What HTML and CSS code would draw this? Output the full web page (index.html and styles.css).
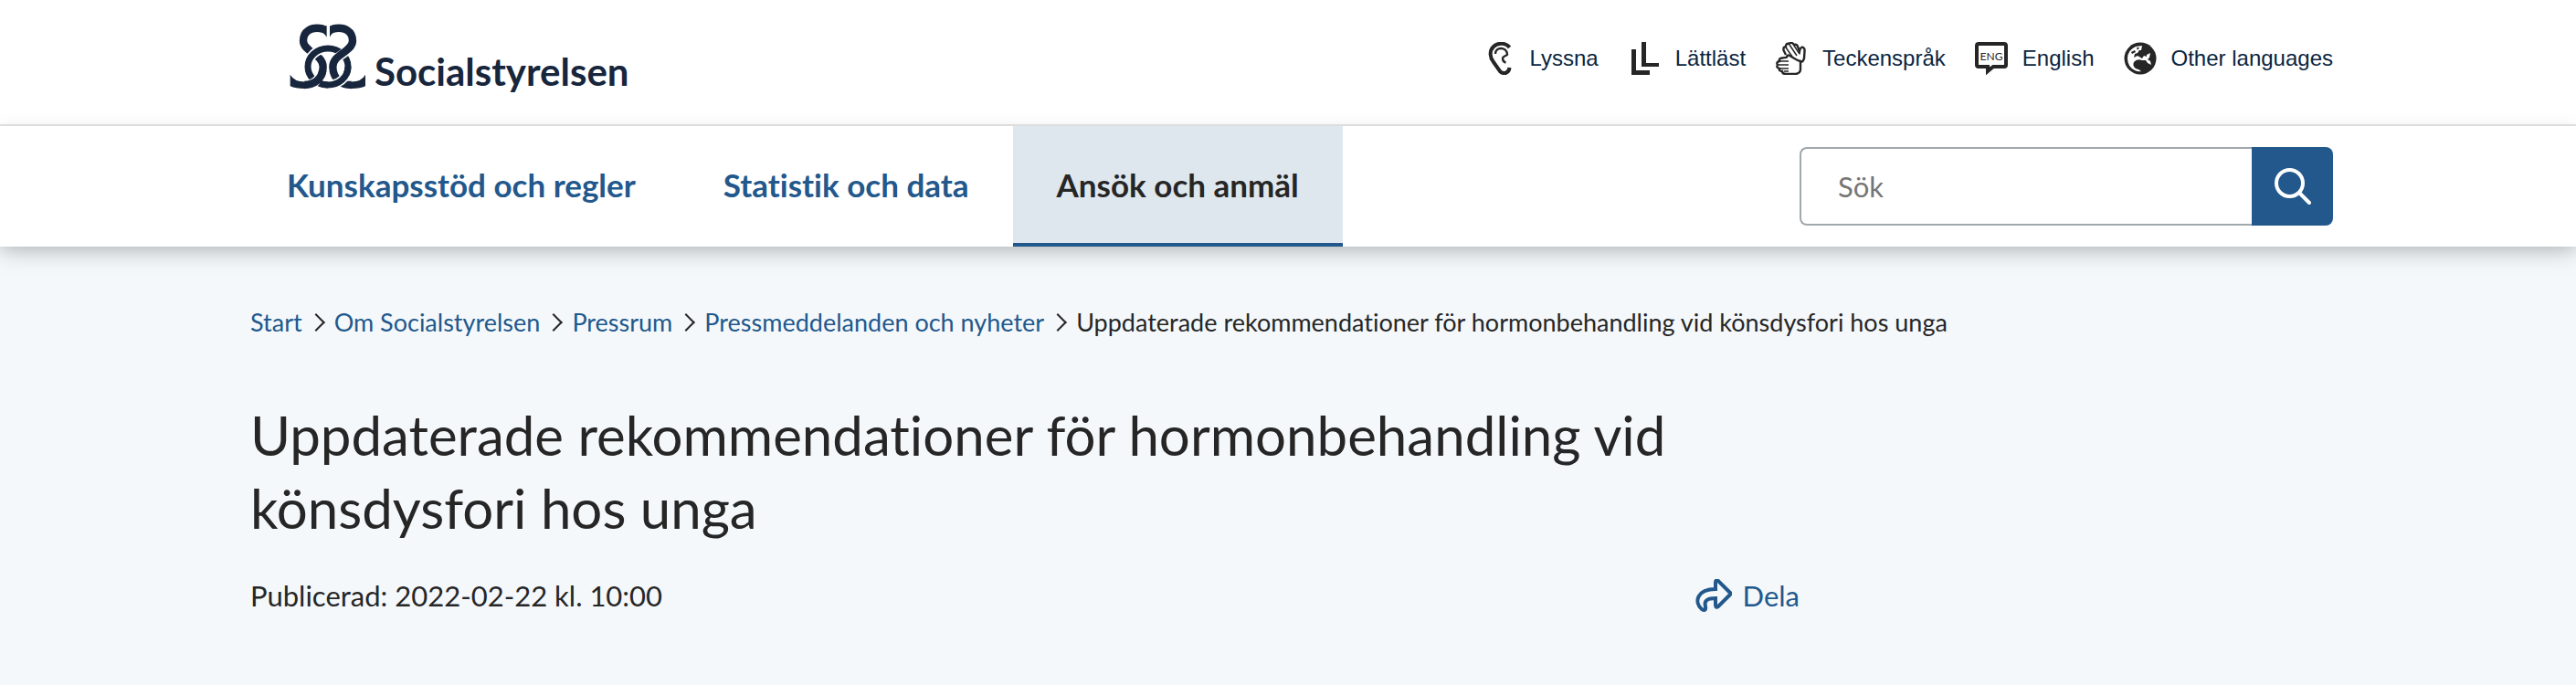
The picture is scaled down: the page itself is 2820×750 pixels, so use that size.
FILE: index.html
```html
<!DOCTYPE html>
<html lang="sv">
<head>
  <meta charset="UTF-8">
  <meta name="viewport" content="width=device-width, initial-scale=1.0">
  <title>Uppdaterade rekommendationer för hormonbehandling vid könsdysfori hos unga - Socialstyrelsen</title>
  <link rel="stylesheet" href="styles.css">
</head>
<body>
  <header>
    <div class="top">
      <div class="container top-row">
        <a class="logo" href="#">
          <svg class="logo-mark" viewBox="72 66 264 228" aria-hidden="true">
            <!-- left S -->
            <path class="band" d="M192 89C150 79 126 98 126 128C127 166 192 172 191 214C190 250 166 273 130 273"/>
            <!-- ring -->
            <ellipse class="halo" cx="207" cy="213" rx="66" ry="60"/>
            <ellipse class="ring" cx="207" cy="213" rx="66" ry="60"/>
            <!-- right S -->
            <path class="halo" d="M288 140C280 168 223 176 223 214C224 240 234 256 250 264"/>
            <path class="band" d="M222 89C264 79 288 98 288 128C287 166 222 172 223 214C224 250 248 273 284 273"/>
            <!-- crossings at the bottom -->
            <path class="halo" d="M184 241C173 262 152 273 130 273"/>
            <path class="band" d="M190 224C186 254 162 273 130 273"/>
            <path class="halo" d="M268 236C257 259 234 273 207 273"/>
            <path class="ring" d="M273 213C273 248 243 273 207 273C196 273 188 271 180 268"/>
            <path class="shape" d="M203 79V116C192 98 178 97 165 97V78Q185 76 203 79zM213 79V116C222 98 236 97 249 97V78Q231 76 213 79z"/>
            <path class="shape" d="M83 239Q98 265 138 262V285Q105 287 83 277zM330 239Q316 265 276 262V285Q309 287 330 277z"/>
          </svg>
          <span>Socialstyrelsen</span>
        </a>
        <ul class="tools">
          <li><a href="#">
            <svg class="icon" viewBox="0 0 36 36" aria-hidden="true">
              <path class="line thick" d="M29.500 6C26 1 17 0 12 5C7 10 8 17 12 22L19 32C23 36 29 34 29.500 28"/>
              <path class="line" d="M14 13C14 5 26 5 27 13C28 15 22 15 22 18C22 21 23 22 25.500 22.500"/>
            </svg>Lyssna</a></li>
          <li><a href="#">
            <svg class="icon" viewBox="0 0 36 36" aria-hidden="true">
              <path d="M15 0h5v23h14v4H15zM4 8h5v23h15v5H4z"/>
            </svg>Lättläst</a></li>
          <li><a href="#">
            <svg class="icon" viewBox="0 0 36 36" aria-hidden="true">
              <path class="line" d="M12 14L9.500 9Q9 5 12 5Q12 1 15.500 2Q18-1 21 3Q24 2 25 5L27 10Q28 5 31 6Q33 7 32.500 10L32 18Q31 22 28 22"/>
              <path class="line thin" d="M12 6l7 10M16 3l8 12M21 4l6 9"/>
              <path class="line" d="M28 21Q24 20 18 16Q14 13 13 16Q14 17 8 17.500Q4 18 5 21Q1 22 3 25Q1 28 5 29Q4 32 8 32Q8 35 12 35H23Q28 34 28 30z"/>
              <path class="line thin" d="M5 21h10M4 25h11M6 29h9M10 32h5"/>
            </svg>Teckenspråk</a></li>
          <li><a href="#">
            <svg class="icon" viewBox="0 0 36 36" aria-hidden="true">
              <path class="line thick" d="M4 2H32Q34 2 34 4V25Q34 27 32 27H20L14 32V27H4Q2 27 2 25V4Q2 2 4 2z"/>
              <path d="M12 27v9l9-9z"/>
              <text class="icon-text" x="18" y="20">ENG</text>
            </svg>English</a></li>
          <li><a href="#">
            <svg class="icon" viewBox="0 0 36 36" aria-hidden="true">
              <circle cx="18" cy="18" r="17.500"/>
              <path class="land" d="M20 4L13 5Q4 9 4 18Q4 27 12 31Q16 33 19 32Q17 30 13 29Q9 26 11 22Q14 18 20 20L24 20L26 23L30 25L29 21L26 19L28 17L29 12L25 14L25 16L22 15L20 18L15 15L11 17L12 13L15 12L17 9L19 9z"/>
              <path d="M8 11l4-2 1 2-4 2zM14 6l3 0-2 3z"/>
            </svg>Other languages</a></li>
        </ul>
      </div>
    </div>
    <div class="menu">
      <div class="container menu-row">
        <nav>
          <a href="#">Kunskapsstöd och regler</a>
          <a href="#">Statistik och data</a>
          <a class="active" href="#">Ansök och anmäl</a>
        </nav>
        <form class="search">
          <input type="text" aria-label="Sök" placeholder="Sök">
          <button type="submit" aria-label="Sök">
            <svg viewBox="0 0 40 40" aria-hidden="true">
              <circle cx="16.500" cy="16.500" r="14.500"/>
              <path d="M27 27l11 11"/>
            </svg>
          </button>
        </form>
      </div>
    </div>
  </header>

  <main class="container">
    <ol class="breadcrumb">
      <li><a href="#">Start</a></li>
      <li><a href="#">Om Socialstyrelsen</a></li>
      <li><a href="#">Pressrum</a></li>
      <li><a href="#">Pressmeddelanden och nyheter</a></li>
      <li>Uppdaterade rekommendationer för hormonbehandling vid könsdysfori hos unga</li>
    </ol>
    <article>
      <h1>Uppdaterade rekommendationer för hormonbehandling vid könsdysfori hos unga</h1>
      <div class="meta">
        <span>Publicerad: 2022-02-22 kl. 10:00</span>
        <button class="share" type="button">
          <svg viewBox="0 0 40 36" aria-hidden="true">
            <path d="M22 11V4q0-4 3-2L38 15q1 1 0 2L25 30q-3 2-3-2V21C14 21 9 23 11 30q1 6-4 3C-2 25 2 11 22 11z"/>
          </svg>
          Dela
        </button>
      </div>
    </article>
  </main>
</body>
</html>
```
FILE: styles.css
```css
* {
  box-sizing: border-box;
}
body {
  margin: 0;
  background-color: #f4f8fb;
  color: #262626;
  font-family: Lato, sans-serif;
  font-size: 31px;
  font-variant-ligatures: none;
}
a {
  color: #22588c;
  text-decoration: none;
}
ul, ol {
  list-style: none;
  margin: 0;
  padding: 0;
}
.container {
  max-width: 2288px;
  margin: 0 auto;
}

/* Header */
header {
  background-color: #fff;
  box-shadow: 0 4px 24px rgba(0, 0, 0, 0.25);
}
.top-row {
  display: flex;
  align-items: flex-start;
  justify-content: space-between;
  height: 136px;
  padding: 22px 0 0 48px;
}
.logo {
  display: flex;
  gap: 8px;
  color: #17263c;
  font-size: 42px;
  font-weight: 700;
  line-height: 112px;
}
.logo-mark {
  width: 88px;
  height: 80px;
  fill: none;
}
.logo-mark .band {
  stroke: #17263c;
  stroke-width: 25;
}
.logo-mark .ring {
  stroke: #17263c;
  stroke-width: 21;
}
.logo-mark .halo {
  stroke: #fff;
  stroke-width: 31;
}
.logo-mark .shape {
  fill: #17263c;
}
.tools {
  display: flex;
  gap: 32px;
  padding-top: 24px;
}
.tools a {
  display: flex;
  align-items: center;
  gap: 16px;
  color: #0b2540;
  font-family: "Liberation Sans", Arial, sans-serif;
  font-size: 24px;
  line-height: 36px;
}
.icon {
  width: 36px;
  height: 36px;
  fill: #262626;
}
.icon .line {
  fill: none;
  stroke: #262626;
  stroke-width: 2.4;
}
.icon .thick {
  stroke-width: 4;
}
.icon .thin {
  stroke-width: 1.5;
}
.icon .land {
  fill: #fff;
}
.icon-text {
  font-family: Lato, sans-serif;
  font-size: 12px;
  text-anchor: middle;
}

/* Menu */
.menu {
  border-top: 2px solid #ddd;
  background-color: #fff;
  box-shadow: 0 0 16px rgba(0, 0, 0, 0.06);
}
.menu-row {
  display: flex;
  align-items: center;
  justify-content: space-between;
}
nav {
  display: flex;
}
nav a {
  padding: 0 48px;
  border-bottom: 4px solid transparent;
  font-size: 35px;
  font-weight: 700;
  line-height: 128px;
}
nav .active {
  border-color: #22588c;
  background-color: #dfe7ee;
  color: #262626;
}
.search {
  display: flex;
  width: 584px;
  height: 86px;
}
.search input {
  flex: 1;
  min-width: 0;
  padding: 0 40px;
  border: 2px solid #a0a8ac;
  border-right: none;
  border-radius: 8px 0 0 8px;
  background-color: #fff;
  font-family: inherit;
  font-size: 31px;
}
.search input::placeholder {
  color: #757575;
}
.search button {
  display: flex;
  align-items: center;
  justify-content: center;
  width: 89px;
  padding: 0;
  border: none;
  border-radius: 0 8px 8px 0;
  background-color: #22588c;
  cursor: pointer;
}
.search svg {
  width: 40px;
  height: 40px;
  fill: none;
  stroke: #fff;
  stroke-width: 4;
  stroke-linecap: round;
}

/* Content */
.breadcrumb {
  display: flex;
  padding: 63px 8px;
  font-size: 27px;
  line-height: 40px;
}
.breadcrumb li {
  display: flex;
  align-items: center;
}
.breadcrumb li + li::before {
  content: "";
  width: 12px;
  height: 12px;
  margin: 0 13px 0 8px;
  border-top: 2px solid #262626;
  border-right: 2px solid #262626;
  transform: rotate(45deg);
}
article {
  width: 75%;
  padding: 0 12px 0 8px;
}
h1 {
  margin: 0 0 32px;
  font-size: 60px;
  font-weight: 400;
  line-height: 80px;
}
.meta {
  display: flex;
  justify-content: space-between;
  line-height: 48px;
}
.share {
  display: flex;
  align-items: center;
  gap: 12px;
  padding: 0;
  border: none;
  background: none;
  color: #22588c;
  font: inherit;
  cursor: pointer;
}
.share svg {
  width: 40px;
  height: 36px;
  fill: none;
  stroke: #22588c;
  stroke-width: 4;
}
```
